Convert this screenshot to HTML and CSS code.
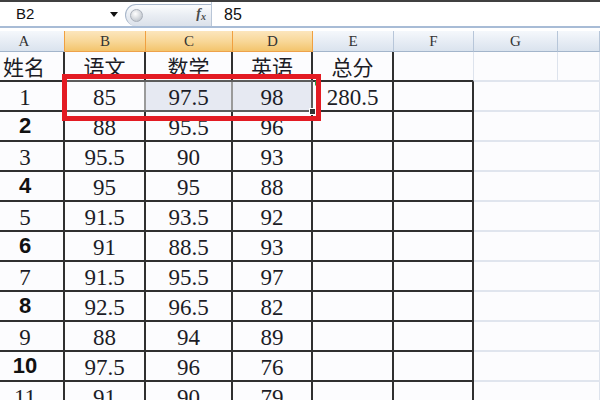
FILE: index.html
```html
<!DOCTYPE html>
<html>
<head>
<meta charset="utf-8">
<link rel="stylesheet" href="styles.css">
</head>
<body>
<div class="top"></div>
<div class="fbar">
  <div class="namebox"><span class="ref">B2</span><span class="caret"></span></div>
  <div class="pill"><span class="knob"></span><span class="fx">f<sub>x</sub></span></div>
  <div class="fcontent">85</div>
</div>
<div class="fline"></div>
<div class="gap"></div>
<div class="sheet">
  <div class="ch pre colA">A</div>
  <div class="ch sel">B</div>
  <div class="ch sel">C</div>
  <div class="ch sel">D</div>
  <div class="ch">E</div>
  <div class="ch">F</div>
  <div class="ch">G</div>
  <div class="ch"></div>

  <div class="t colA zh left">姓名</div>
  <div class="t zh">语文</div>
  <div class="t zh">数学</div>
  <div class="t zh">英语</div>
  <div class="t zh">总分</div>
  <div class="c tb"></div>
  <div class="c"></div>
  <div class="c"></div>

  <div class="t colA num">1</div>
  <div class="t num sw">85</div>
  <div class="t num hl">97.5</div>
  <div class="t num hl">98</div>
  <div class="t num">280.5</div>
  <div class="t"></div>
  <div class="c nr"></div>
  <div class="c"></div>

  <div class="t colA bnum">2</div>
  <div class="t num">88</div>
  <div class="t num">95.5</div>
  <div class="t num">96</div>
  <div class="t"></div>
  <div class="t"></div>
  <div class="c nr"></div>
  <div class="c"></div>

  <div class="t colA num">3</div>
  <div class="t num">95.5</div>
  <div class="t num">90</div>
  <div class="t num">93</div>
  <div class="t"></div>
  <div class="t"></div>
  <div class="c nr"></div>
  <div class="c"></div>

  <div class="t colA bnum">4</div>
  <div class="t num">95</div>
  <div class="t num">95</div>
  <div class="t num">88</div>
  <div class="t"></div>
  <div class="t"></div>
  <div class="c nr"></div>
  <div class="c"></div>

  <div class="t colA num">5</div>
  <div class="t num">91.5</div>
  <div class="t num">93.5</div>
  <div class="t num">92</div>
  <div class="t"></div>
  <div class="t"></div>
  <div class="c nr"></div>
  <div class="c"></div>

  <div class="t colA bnum">6</div>
  <div class="t num">91</div>
  <div class="t num">88.5</div>
  <div class="t num">93</div>
  <div class="t"></div>
  <div class="t"></div>
  <div class="c nr"></div>
  <div class="c"></div>

  <div class="t colA num">7</div>
  <div class="t num">91.5</div>
  <div class="t num">95.5</div>
  <div class="t num">97</div>
  <div class="t"></div>
  <div class="t"></div>
  <div class="c nr"></div>
  <div class="c"></div>

  <div class="t colA bnum">8</div>
  <div class="t num">92.5</div>
  <div class="t num">96.5</div>
  <div class="t num">82</div>
  <div class="t"></div>
  <div class="t"></div>
  <div class="c nr"></div>
  <div class="c"></div>

  <div class="t colA num">9</div>
  <div class="t num">88</div>
  <div class="t num">94</div>
  <div class="t num">89</div>
  <div class="t"></div>
  <div class="t"></div>
  <div class="c nr"></div>
  <div class="c"></div>

  <div class="t colA bnum">10</div>
  <div class="t num">97.5</div>
  <div class="t num">96</div>
  <div class="t num">76</div>
  <div class="t"></div>
  <div class="t"></div>
  <div class="c nr"></div>
  <div class="c"></div>

  <div class="t colA num">11</div>
  <div class="t num">91</div>
  <div class="t num">90</div>
  <div class="t num">79</div>
  <div class="t"></div>
  <div class="t"></div>
  <div class="c nr"></div>
  <div class="c"></div>

  <div class="selection"></div>
  <div class="handle"></div>
  <div class="flag"></div>
  <div class="redbox"></div>
</div>
</body>
</html>
```

FILE: styles.css
```css
html, body {
  margin: 0;
  padding: 0;
}
body {
  width: 600px;
  height: 400px;
  overflow: hidden;
  background: #fcfcfe;
  font-family: "Liberation Sans", Arial, sans-serif;
}
.top {
  height: 2px;
  background: #404040;
}
.fbar {
  display: flex;
  height: 24px;
  background: #fff;
}
.namebox {
  width: 125px;
  display: flex;
  align-items: center;
}
.ref {
  flex: 1;
  padding-left: 16px;
  font-size: 15px;
  color: #111;
  line-height: 24px;
}
.caret {
  width: 0;
  height: 0;
  border-left: 4px solid transparent;
  border-right: 4px solid transparent;
  border-top: 5px solid #111;
  margin-right: 7px;
}
.pill {
  box-sizing: border-box;
  width: 86px;
  height: 22px;
  margin-top: 2px;
  border: 1px solid #a7b6ca;
  border-right: none;
  border-bottom: none;
  border-radius: 11px 0 0 11px;
  background: linear-gradient(#fbfcfd, #e9edf3 50%, #dbe1ea);
  display: flex;
  align-items: center;
  justify-content: space-between;
  padding: 0 5px 0 4px;
}
.knob {
  width: 11px;
  height: 11px;
  border-radius: 50%;
  border: 1px solid #aab0ba;
  background: radial-gradient(circle at 40% 35%, #ffffff, #c3c8cf 75%);
}
.fx {
  font-family: "Liberation Serif", serif;
  font-style: italic;
  font-weight: bold;
  font-size: 14px;
  color: #4b4b4b;
  line-height: 14px;
}
.fx sub {
  font-size: 10px;
  vertical-align: -2px;
}
.fcontent {
  flex: 1;
  border-left: 1px solid #b9c6d7;
  padding-left: 12px;
  font-size: 16px;
  line-height: 26px;
  color: #111;
}
.fline {
  height: 2px;
  background: #a8bcd6;
}
.gap {
  height: 3px;
  background: #fff;
}
.sheet {
  position: relative;
  display: grid;
  grid-template-columns: 65px 81px 87px 80px 81px 80px 84px 1fr;
  grid-template-rows: 21px;
  grid-auto-rows: 30px;
}
.ch {
  box-sizing: border-box;
  background: linear-gradient(#f5f8fc, #e6ecf4 55%, #dae3ee);
  border-right: 1px solid #b7c6d9;
  border-bottom: 1px solid #a3b5cb;
  font-family: "Liberation Serif", serif;
  font-size: 15px;
  color: #333;
  text-align: center;
  line-height: 21px;
}
.ch.sel {
  background: linear-gradient(#fce6bd, #f8d695 55%, #f3c46c);
  border-right-color: #f0a040;
  border-bottom-color: #eea24a;
}
.ch.pre {
  border-right-color: #f0a040;
}
.ch.colA {
  padding-right: 16px;
}
.t, .c {
  box-sizing: border-box;
  display: flex;
  align-items: center;
  justify-content: center;
  color: #1c1c26;
}
.t {
  border-right: 2px solid #303030;
  border-bottom: 2px solid #303030;
}
.c {
  border-right: 1px solid #dde3ed;
  border-bottom: 2px solid #e0e5ee;
}
.c.tb {
  border-bottom-color: #303030;
}
.c.nr {
  border-right: none;
}
.colA {
  padding-right: 13px;
}
.colA.left {
  justify-content: flex-start;
  padding-left: 3px;
}
.zh {
  font-family: "Noto Sans CJK SC", sans-serif;
  font-size: 21px;
  font-weight: 400;
}
.num {
  font-family: "Liberation Serif", serif;
  font-size: 23px;
  padding-top: 3px;
}
.bnum {
  font-family: "Liberation Sans", Arial, sans-serif;
  font-weight: bold;
  font-size: 22px;
  color: #111;
}
.hl {
  background: #e6e9f2;
}
.sw, .hl {
  border-right-color: #9a9a9a;
}
.selection {
  position: absolute;
  left: 65px;
  top: 49px;
  width: 248px;
  height: 32px;
  box-sizing: border-box;
  border: 2px solid #5c5c5c;
  pointer-events: none;
}
.handle {
  position: absolute;
  left: 309px;
  top: 77px;
  width: 5px;
  height: 5px;
  background: #333;
  border: 1px solid #fff;
}
.flag {
  position: absolute;
  left: 315px;
  top: 50px;
  width: 0;
  height: 0;
  border-top: 5px solid #1f9b3c;
  border-right: 5px solid transparent;
}
.redbox {
  position: absolute;
  left: 62px;
  top: 43px;
  width: 259px;
  height: 47px;
  box-sizing: border-box;
  border: 5px solid #e31b23;
}
```
